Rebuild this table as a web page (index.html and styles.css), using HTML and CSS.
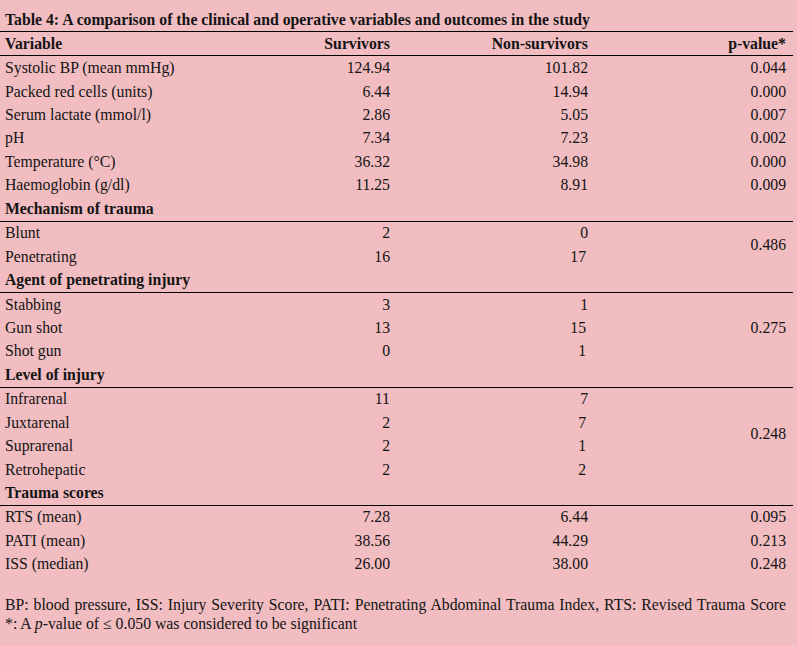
FILE: index.html
```html
<!DOCTYPE html>
<html>
<head>
<meta charset="utf-8">
<link rel="stylesheet" href="styles.css">
</head>
<body>
<div class="page">
  <div class="title">Table 4: A comparison of the clinical and operative variables and outcomes in the study</div>
  <table class="data">
    <colgroup>
      <col class="c1"><col class="c2"><col class="c3"><col class="c4">
    </colgroup>
    <thead>
      <tr class="sep"><th class="l">Variable</th><th>Survivors</th><th>Non-survivors</th><th>p-value*</th></tr>
    </thead>
    <tbody>
      <tr><td class="l">Systolic BP (mean mmHg)</td><td>124.94</td><td>101.82</td><td>0.044</td></tr>
      <tr><td class="l">Packed red cells (units)</td><td>6.44</td><td>14.94</td><td>0.000</td></tr>
      <tr><td class="l">Serum lactate (mmol/l)</td><td>2.86</td><td>5.05</td><td>0.007</td></tr>
      <tr><td class="l">pH</td><td>7.34</td><td>7.23</td><td>0.002</td></tr>
      <tr><td class="l">Temperature (°C)</td><td>36.32</td><td>34.98</td><td>0.000</td></tr>
      <tr><td class="l">Haemoglobin (g/dl)</td><td>11.25</td><td>8.91</td><td>0.009</td></tr>
      <tr class="sep"><th class="l" colspan="4">Mechanism of trauma</th></tr>
      <tr><td class="l">Blunt</td><td>2</td><td>0</td><td rowspan="2">0.486</td></tr>
      <tr><td class="l">Penetrating</td><td>16</td><td>17</td></tr>
      <tr class="sep"><th class="l" colspan="4">Agent of penetrating injury</th></tr>
      <tr><td class="l">Stabbing</td><td>3</td><td>1</td><td rowspan="3">0.275</td></tr>
      <tr><td class="l">Gun shot</td><td>13</td><td>15</td></tr>
      <tr><td class="l">Shot gun</td><td>0</td><td>1</td></tr>
      <tr class="sep"><th class="l" colspan="4">Level of injury</th></tr>
      <tr><td class="l">Infrarenal</td><td>11</td><td>7</td><td rowspan="4">0.248</td></tr>
      <tr><td class="l">Juxtarenal</td><td>2</td><td>7</td></tr>
      <tr><td class="l">Suprarenal</td><td>2</td><td>1</td></tr>
      <tr><td class="l">Retrohepatic</td><td>2</td><td>2</td></tr>
      <tr class="sep"><th class="l" colspan="4">Trauma scores</th></tr>
      <tr><td class="l">RTS (mean)</td><td>7.28</td><td>6.44</td><td>0.095</td></tr>
      <tr><td class="l">PATI (mean)</td><td>38.56</td><td>44.29</td><td>0.213</td></tr>
      <tr><td class="l">ISS (median)</td><td>26.00</td><td>38.00</td><td>0.248</td></tr>
    </tbody>
  </table>
  <div class="notes">
    <p class="note just">BP: blood pressure, ISS: Injury Severity Score, PATI: Penetrating Abdominal Trauma Index, RTS: Revised Trauma Score</p>
    <p class="note">*: A <i>p</i>-value of ≤ 0.050 was considered to be significant</p>
  </div>
</div>
</body>
</html>
```
FILE: styles.css
```css
html, body {
  margin: 0;
  padding: 0;
  background: #f1bdc1;
}
body {
  font-family: "Liberation Serif", "Times New Roman", serif;
  font-size: 15.75px;
  color: #141414;
  width: 797px;
  height: 646px;
  overflow: hidden;
}
.page {
  width: 793px;
  padding-top: 10px;
}
.title {
  font-weight: bold;
  padding-left: 5px;
  height: 21px;
  line-height: 20px;
  border-bottom: 1px solid #000;
}
.data {
  width: 793px;
  border-collapse: collapse;
  table-layout: fixed;
}
.c1 { width: 200px; }
.c2 { width: 195px; }
.c3 { width: 198px; }
.c4 { width: 200px; }
.data th,
.data td {
  height: 23.45px;
  padding: 0 5px 0 5px;
  text-align: right;
  vertical-align: middle;
  white-space: nowrap;
  line-height: 18px;
}
.data th { font-weight: bold; }
.data td:last-child,
.data th:last-child { padding-right: 7px; }
.data .l { text-align: left; }
.data tr.sep th { border-bottom: 1px solid #000; }
.notes {
  padding: 19px 7px 0 5px;
}
.note {
  margin: 0;
  line-height: 19px;
}
.just {
  text-align: justify;
  text-align-last: justify;
}
```
